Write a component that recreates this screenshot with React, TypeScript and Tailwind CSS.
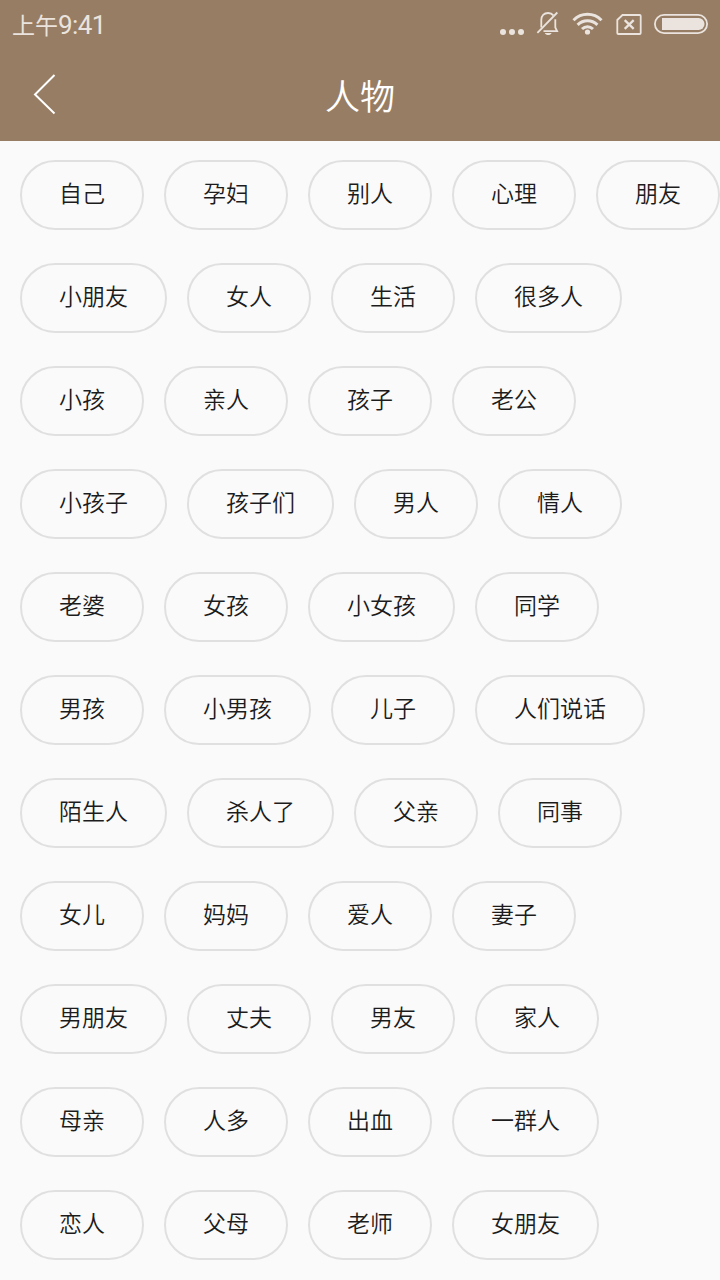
const tagRows: string[][] = [
  ['自己', '孕妇', '别人', '心理', '朋友'],
  ['小朋友', '女人', '生活', '很多人'],
  ['小孩', '亲人', '孩子', '老公'],
  ['小孩子', '孩子们', '男人', '情人'],
  ['老婆', '女孩', '小女孩', '同学'],
  ['男孩', '小男孩', '儿子', '人们说话'],
  ['陌生人', '杀人了', '父亲', '同事'],
  ['女儿', '妈妈', '爱人', '妻子'],
  ['男朋友', '丈夫', '男友', '家人'],
  ['母亲', '人多', '出血', '一群人'],
  ['恋人', '父母', '老师', '女朋友'],
];

const BellOffIcon = () => (
  <svg className="h-8 w-6" viewBox="0 0 24 32" fill="none" stroke="currentColor" strokeWidth="1.8">
    <path d="M5.3 20.5V13c0-4.4 2.6-7 6.8-7 2.3 0 4.1.9 5.2 2.4M19.3 12.2V20.5l1.8 3.7H7.5" />
    <path d="M1.4 25.8 21.3 5.5" />
    <path d="M8.8 26h6.8c-.7 1.5-1.8 2.1-3.4 2.1s-2.7-.6-3.4-2.1Z" fill="currentColor" stroke="none" />
  </svg>
);

const WifiIcon = () => (
  <svg className="h-6 w-8" viewBox="0 0 32 24" fill="none" stroke="currentColor" strokeWidth="3">
    <path d="M1.5 9.2c8-7.8 20-7.8 28 0" />
    <path d="M5.6 13.8c5.7-5.4 14.1-5.4 19.8 0" />
    <path d="M10 18c3.2-3 7.8-3 11 0" />
    <circle cx="15.5" cy="21" r="2.6" fill="currentColor" stroke="none" />
  </svg>
);

const NoSimIcon = () => (
  <svg className="h-[22px] w-[26px]" viewBox="0 0 26 22" fill="none" stroke="currentColor">
    <path d="M6.5 2h17.2a1 1 0 0 1 1 1v17a1 1 0 0 1-1 1H2.3a1 1 0 0 1-1-1V7Z" strokeWidth="1.8" />
    <path d="m8.7 7.2 9 8.6M17.7 7.2l-9 8.6" strokeWidth="2.3" />
  </svg>
);

const BatteryIcon = () => (
  <svg className="h-5 w-[54px]" viewBox="0 0 54 20" fill="none" stroke="currentColor">
    <rect x="0.9" y="0.9" width="52.2" height="18.2" rx="9.1" strokeWidth="1.8" />
    <path d="M8 4h36.5a6 6 0 0 1 0 12H8Z" fill="currentColor" stroke="none" />
  </svg>
);

const StatusBar = () => (
  <div className="flex h-[50px] justify-between pl-3 text-[#ebe4de]">
    <div className="flex items-baseline pt-1.5 leading-9">
      <span className="text-[23px]">上午</span>
      <span className="font-[Roboto,sans-serif] text-[26px] tracking-[-0.6px]">9:41</span>
    </div>
    <div className="flex pr-3">
      <div className="flex gap-[3px] pt-[29px]">
        <i className="size-1.5 rounded-full bg-current" />
        <i className="size-1.5 rounded-full bg-current" />
        <i className="size-1.5 rounded-full bg-current" />
      </div>
      <div className="ml-3 pt-[7px]"><BellOffIcon /></div>
      <div className="ml-3 pt-[11px]"><WifiIcon /></div>
      <div className="ml-3 pt-[13px]"><NoSimIcon /></div>
      <div className="ml-3 pt-3.5"><BatteryIcon /></div>
    </div>
  </div>
);

const Tag = ({ label }: { label: string }) => (
  <button className="h-[70px] shrink-0 rounded-full border-2 border-[#e0e0e0] px-[37px] pb-1.5 text-[23px] leading-none font-[350] text-[#1c1c1c]">
    {label}
  </button>
);

const App = () => {
  return (
    <div className="h-[1280px] w-[720px] overflow-hidden bg-[#fafafa] font-['Noto_Sans_CJK_SC',sans-serif]">
      <header className="h-[141px] bg-[#977d64]">
        <StatusBar />
        <div className="grid h-[91px] grid-cols-3 items-center">
          <button className="pb-1 pl-8 text-white" aria-label="返回">
            <svg className="h-11 w-6" viewBox="0 0 24 44" fill="none" stroke="currentColor" strokeWidth="2">
              <path d="M22.5 3 3 22.5l19.5 19" />
            </svg>
          </button>
          <h1 className="pb-0.5 text-center text-[35px] leading-none font-[350] text-white">人物</h1>
        </div>
      </header>
      <main className="flex flex-col gap-[33px] pt-[19px] pl-5">
        {tagRows.map((row) => (
          <div key={row[0]} className="flex gap-5">
            {row.map((label) => <Tag key={label} label={label} />)}
          </div>
        ))}
      </main>
    </div>
  );
};

export default App;
